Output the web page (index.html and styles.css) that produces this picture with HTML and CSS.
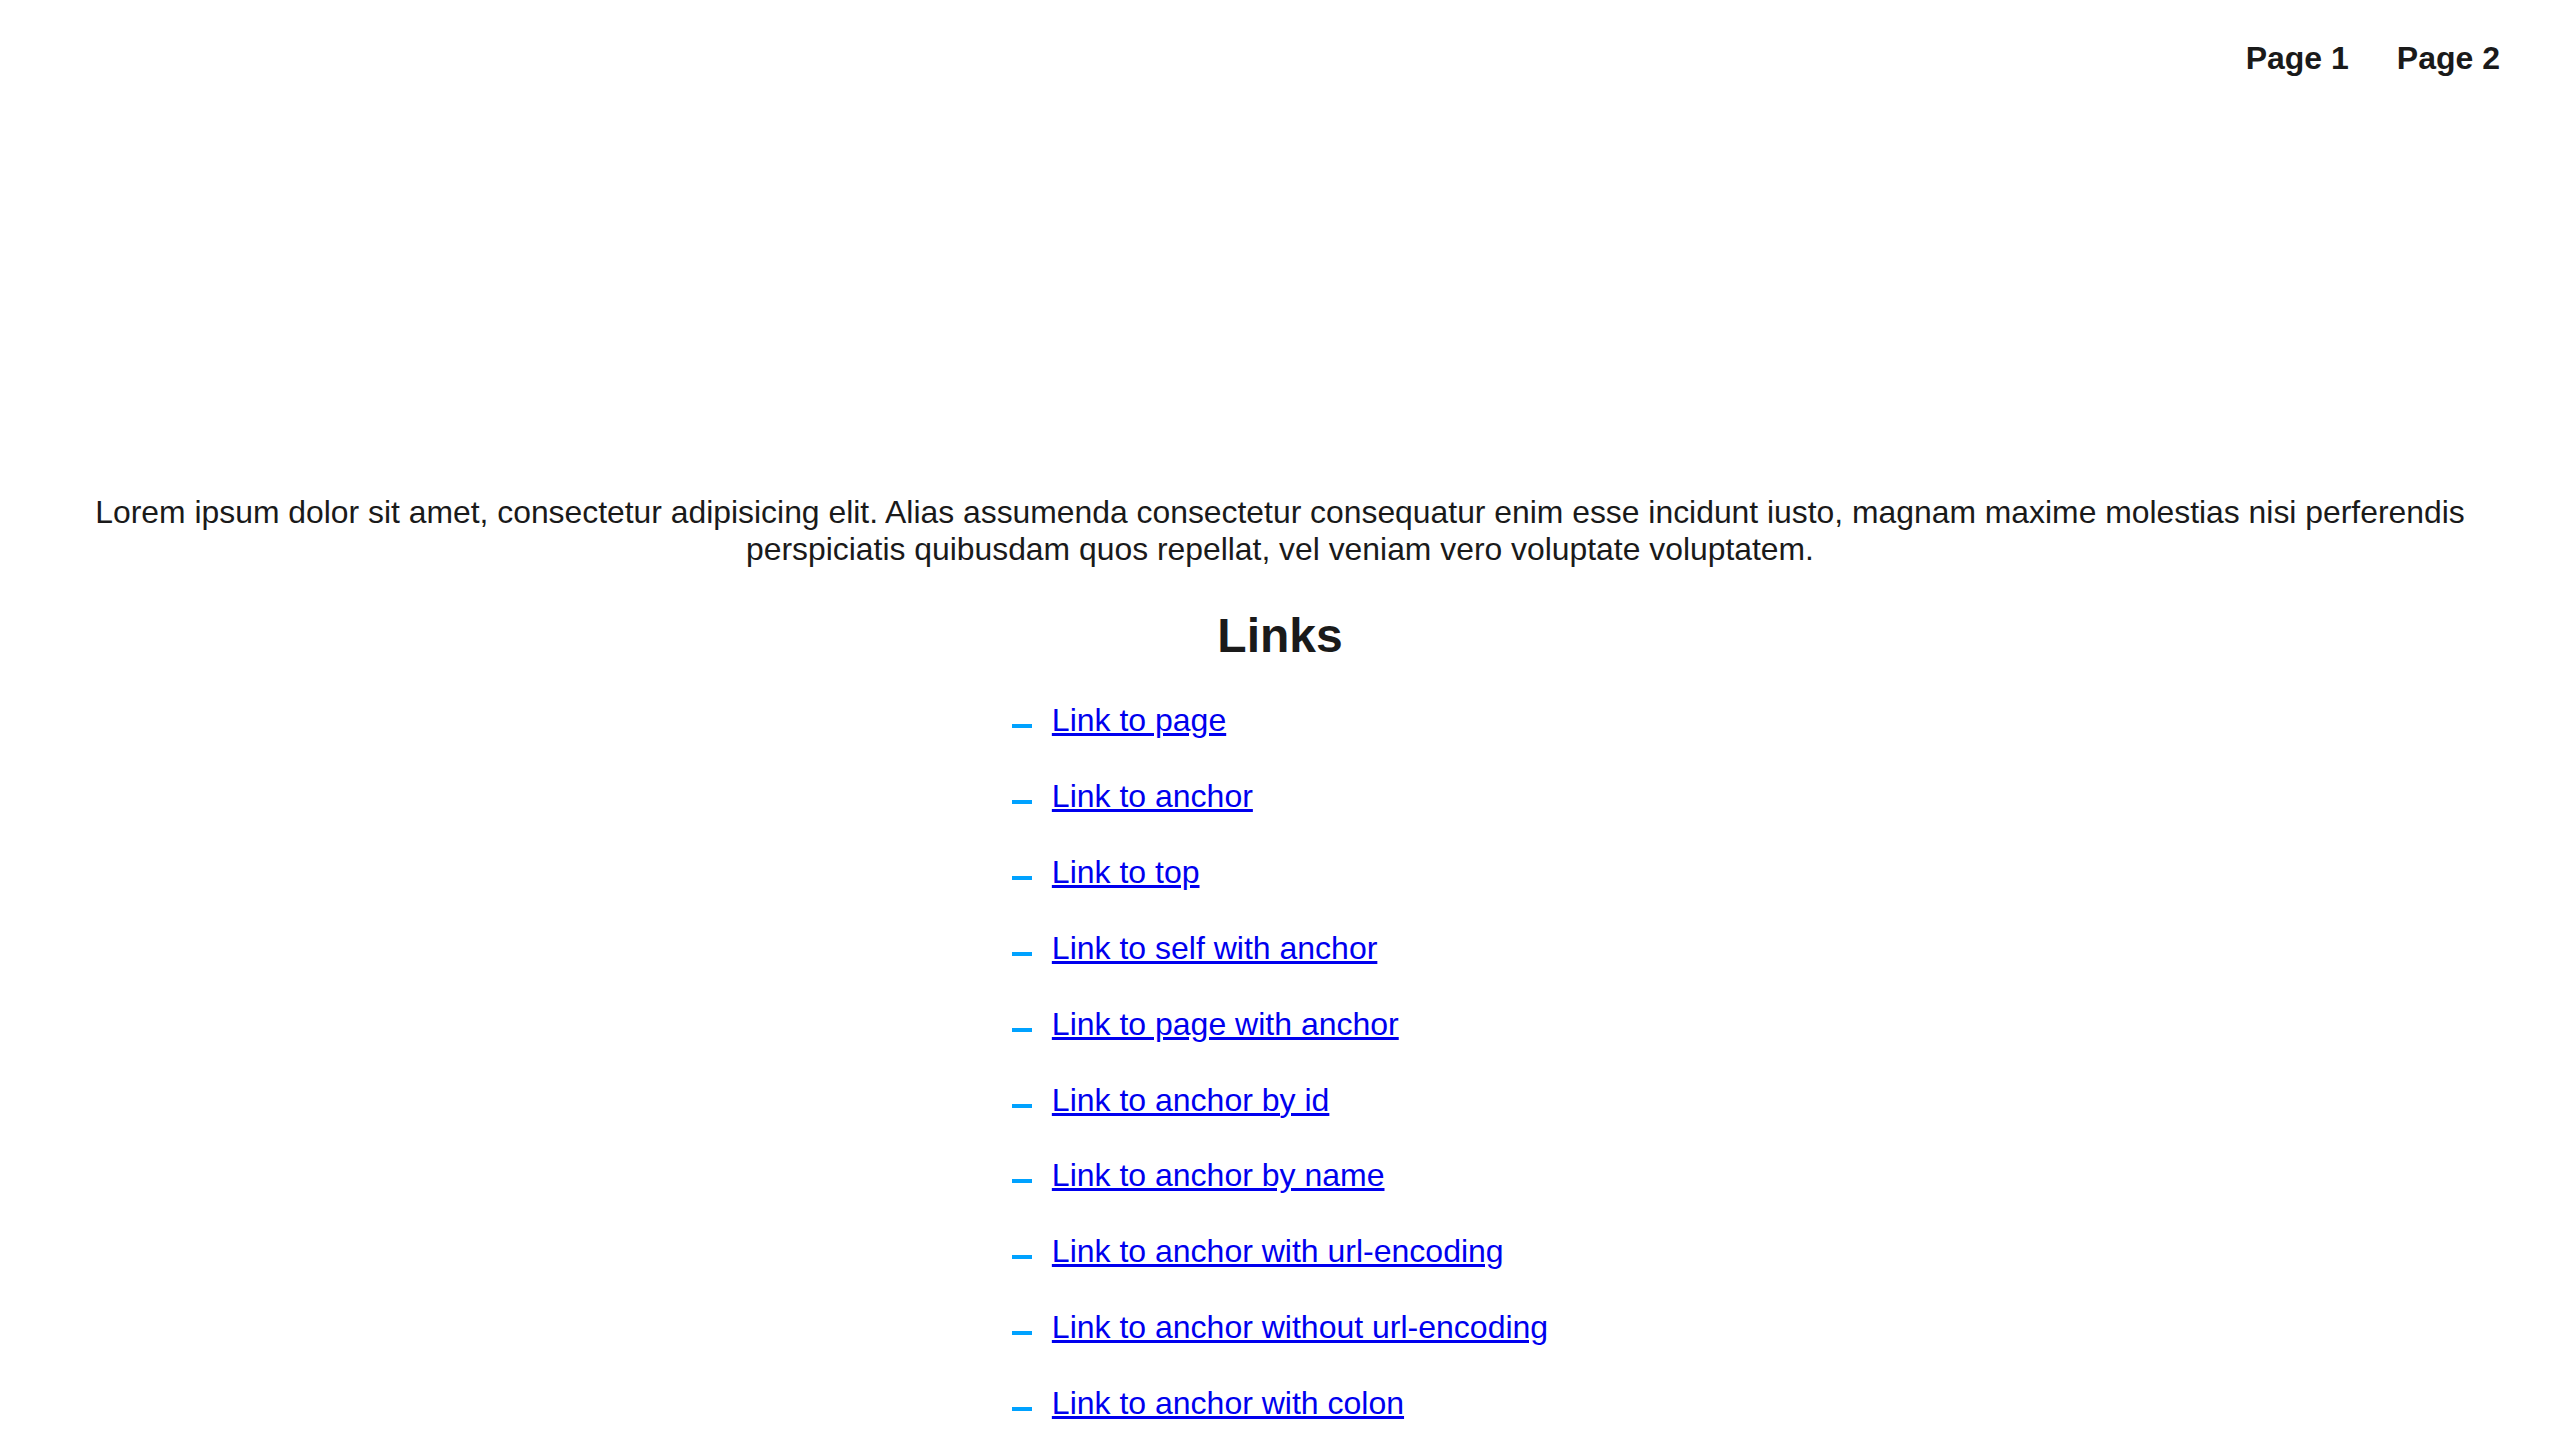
FILE: index.html
```html
<!DOCTYPE html>
<html lang="en">
<head>
<meta charset="utf-8">
<title>Links</title>
<link rel="stylesheet" href="styles.css">
</head>
<body>
<header class="site-header">
  <nav class="nav">
    <a class="nav-link" href="#">Page 1</a>
    <a class="nav-link" href="#">Page 2</a>
  </nav>
</header>
<main class="content">
  <p class="intro">Lorem ipsum dolor sit amet, consectetur adipisicing elit. Alias assumenda consectetur consequatur enim esse incidunt iusto, magnam maxime molestias nisi perferendis perspiciatis quibusdam quos repellat, vel veniam vero voluptate voluptatem.</p>
  <h2 class="section-title">Links</h2>
  <ul class="link-list">
    <li class="link-item"><a href="#">Link to page</a></li>
    <li class="link-item"><a href="#">Link to anchor</a></li>
    <li class="link-item"><a href="#">Link to top</a></li>
    <li class="link-item"><a href="#">Link to self with anchor</a></li>
    <li class="link-item"><a href="#">Link to page with anchor</a></li>
    <li class="link-item"><a href="#">Link to anchor by id</a></li>
    <li class="link-item"><a href="#">Link to anchor by name</a></li>
    <li class="link-item"><a href="#">Link to anchor with url-encoding</a></li>
    <li class="link-item"><a href="#">Link to anchor without url-encoding</a></li>
    <li class="link-item"><a href="#">Link to anchor with colon</a></li>
  </ul>
</main>
</body>
</html>
```
FILE: styles.css
```css
html, body {
  margin: 0;
  padding: 0;
  background: #ffffff;
}

body {
  font-family: "Liberation Sans", Arial, sans-serif;
  font-size: 32px;
  line-height: 1.15;
  color: #1a1a1a;
}

.site-header {
  padding: 40px 60px 0;
}

.nav {
  display: flex;
  justify-content: flex-end;
  gap: 48px;
}

.nav-link {
  font-weight: bold;
  color: #1a1a1a;
  text-decoration: none;
}

.content {
  padding: 417px 64px 0;
  text-align: center;
}

.intro {
  margin: 0;
  font-size: 31.87px;
  line-height: 36.8px;
}

.section-title {
  margin: 41px 0 0;
  font-size: 48px;
  font-weight: bold;
  line-height: 1.15;
}

.link-list {
  display: inline-block;
  list-style: none;
  margin: 38px 0 0;
  padding: 0;
  text-align: left;
}

.link-item {
  margin: 0 0 39.2px;
}

.link-item::before {
  content: "";
  display: inline-block;
  width: 20px;
  height: 4px;
  margin: 0 20px 3px 0;
  background: #00a2ff;
}

.link-item a {
  color: #0000ee;
}
```
